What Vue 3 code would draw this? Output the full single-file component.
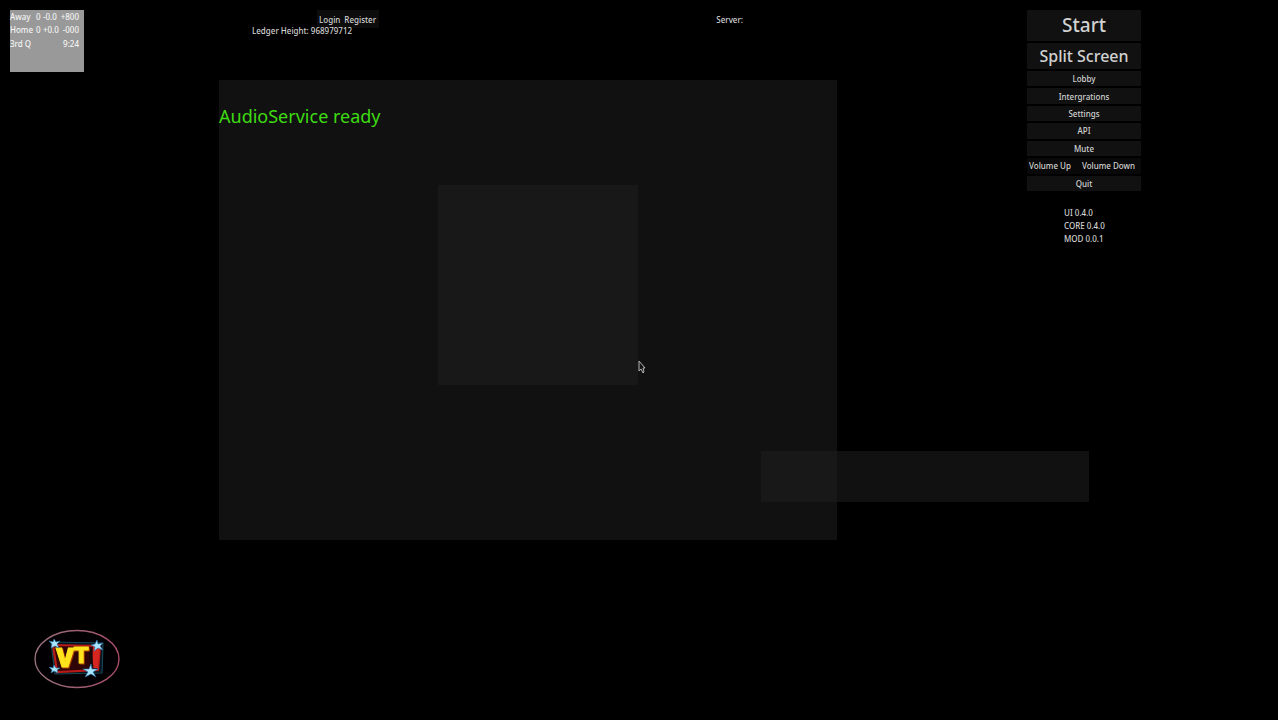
<template>
  <div class="screen">
    <!-- Scoreboard and logo -->
    <aside class="left">
      <table class="scoreboard">
        <tbody>
          <tr v-for="team in teams" :key="team.name">
            <td>{{ team.name }}</td>
            <td class="score">{{ team.score }}</td>
            <td class="score">{{ team.spread }}</td>
            <td class="line">{{ team.line }}</td>
          </tr>
          <tr>
            <td colspan="2">3rd Q</td>
            <td colspan="2" class="line">9:24</td>
          </tr>
        </tbody>
      </table>

      <svg class="logo" viewBox="0 0 86 60" role="img" aria-label="VT">
        <defs>
          <linearGradient id="ring" x1="0" x2="1">
            <stop offset="0" stop-color="#94717b" />
            <stop offset="1" stop-color="#a84c68" />
          </linearGradient>
        </defs>
        <ellipse cx="43" cy="30" rx="42" ry="28.5" fill="#020003" stroke="url(#ring)" stroke-width="1.4" />
        <path d="M17 13L69 14L68 44L21 45Z" fill="#07141d" stroke="#164754" stroke-width="1.2" />
        <path d="M19 16L66 17L64 41L23 43Z" fill="#300507" stroke="#b81a18" stroke-width="2.2" />
        <path d="M59 18L66 17L64 39L58 39Z" fill="#d52620" />
        <path d="M56 20L58 39" stroke="#18090b" stroke-width="3" />
        <text x="22" y="38" class="logo-text"><tspan class="logo-v">V</tspan><tspan dy="-4" class="logo-t">T</tspan></text>
        <g fill="#a9e6ff" stroke="#2670a6" stroke-width="0.6">
          <path d="M20 10L22 13L26 12L23 15L25 19L21 17L17 19L18 15L15 12L19 13Z" />
          <path d="M63 11L64 15L69 14L66 17L69 21L64 19L60 22L61 18L57 16L61 15Z" />
          <path d="M20 36L22 39L26 39L23 41L24 44L20 42L17 44L18 41L15 38L19 39Z" />
          <path d="M57 35L58 40L64 40L59 43L62 48L57 45L51 48L54 43L49 40L55 40Z" />
        </g>
      </svg>
    </aside>

    <main class="center">
      <header class="topbar">
        <div class="account">
          <div class="account-buttons">
            <button type="button">Login</button>
            <button type="button">Register</button>
          </div>
          <span class="ledger">Ledger Height: 968979712</span>
        </div>
        <span class="server">Server:</span>
      </header>

      <section class="stage">
        <p class="status">AudioService ready</p>
        <div class="preview"></div>
        <div class="message-bar"></div>
        <svg class="cursor" viewBox="0 0 8 14" aria-hidden="true">
          <path d="M1 1L1 11L3 9L5 13L6 12L5 8L7 8Z" fill="#141414" stroke="#b5b5b5" />
        </svg>
      </section>
    </main>

    <nav class="menu">
      <button type="button" class="start">Start</button>
      <button type="button" class="split">Split Screen</button>
      <div class="options">
        <button v-for="item in items" :key="item" type="button">{{ item }}</button>
        <div class="volume">
          <button type="button">Volume Up</button>
          <button type="button">Volume Down</button>
        </div>
        <button type="button">Quit</button>
      </div>

      <ul class="versions">
        <li v-for="version in versions" :key="version">{{ version }}</li>
      </ul>
    </nav>
  </div>
</template>

<script setup>
const teams = [
  { name: 'Away', score: '0', spread: '-0.0', line: '+800' },
  { name: 'Home', score: '0', spread: '+0.0', line: '-000' }
];

const items = ['Lobby', 'Intergrations', 'Settings', 'API', 'Mute'];
const versions = ['UI 0.4.0', 'CORE 0.4.0', 'MOD 0.0.1'];
</script>

<style>
body {
  margin: 0;
  background: #000;
}
</style>

<style scoped>
.screen {
  display: grid;
  grid-template-columns: 209fr 618fr 190fr 114px 127fr;
  box-sizing: border-box;
  min-height: 100vh;
  padding: 10px;
  overflow: hidden;
  color: #d2d2d2;
  font-family: "Noto Sans", "Open Sans", sans-serif;
  font-size: 8px;
  font-weight: 500;
  line-height: 13px;
}

button {
  padding: 0;
  border: none;
  background: #111;
  color: inherit;
  font: inherit;
  white-space: nowrap;
}

.left {
  display: flex;
  flex-direction: column;
  align-items: flex-start;
}

.scoreboard {
  width: 74px;
  height: 62px;
  padding-bottom: 22px;
  border-spacing: 0;
  background: #999;
  color: #f4f4f4;
  white-space: nowrap;
}

.scoreboard td {
  padding: 0;
}

.scoreboard .score {
  padding-left: 2px;
}

.scoreboard .line {
  padding-right: 5px;
  text-align: right;
}

.logo {
  width: 86px;
  height: 60px;
  margin: auto 0 21px 24px;
}

.logo-text {
  fill: #ffe31c;
  stroke: #ffe31c;
  filter: drop-shadow(1px 1px 0 #a83a00);
}

.logo-v {
  font-family: "Open Sans", sans-serif;
  font-size: 26px;
  font-weight: 800;
}

.logo-t {
  font-family: "DejaVu Sans", sans-serif;
  font-size: 21px;
  font-weight: 700;
}

/* Account links and playing area */
.topbar {
  display: flex;
  justify-content: space-between;
  height: 70px;
}

.account {
  display: flex;
  flex-direction: column;
  margin-left: 33px;
}

.account-buttons {
  display: flex;
  align-self: flex-end;
  gap: 4px;
  height: 15px;
  margin-right: -27px;
  padding: 3px 3px 0 2px;
  background: #0c0c0c;
}

.account-buttons button {
  height: 13px;
  background: none;
}

.ledger {
  margin-top: -4px;
}

.server {
  margin: 3px 94px 0 0;
}

.stage {
  position: relative;
  height: 460px;
  background: #111;
}

.status {
  margin: 0;
  padding-top: 24px;
  color: #3edb12;
  font-size: 18px;
  font-weight: 400;
  line-height: 24px;
}

.preview {
  width: 200px;
  height: 200px;
  margin: 57px 0 0 calc(50% - 90px);
  background: #181818;
}

/* Floating bar that runs past the edge of the stage */
.message-bar {
  position: absolute;
  right: -252px;
  bottom: 38px;
  width: 328px;
  height: 51px;
  background: linear-gradient(to right, #181818 76px, #111 76px);
}

.cursor {
  position: absolute;
  top: 280px;
  left: 419px;
  width: 8px;
  height: 14px;
}

.menu {
  display: flex;
  grid-column: 4;
  flex-direction: column;
  gap: 2px;
}

.start {
  height: 31px;
  font-size: 19px;
}

.split {
  height: 26px;
  font-size: 16px;
}

.options {
  display: grid;
  grid-auto-rows: 1fr;
  gap: 2px;
  height: 120px;
}

.volume {
  display: flex;
  justify-content: space-between;
  padding: 0 6px 0 2px;
  background: #090909;
}

.volume button {
  background: none;
}

.versions {
  margin: 13px 0 0 37px;
  padding: 0;
  list-style: none;
}
</style>
